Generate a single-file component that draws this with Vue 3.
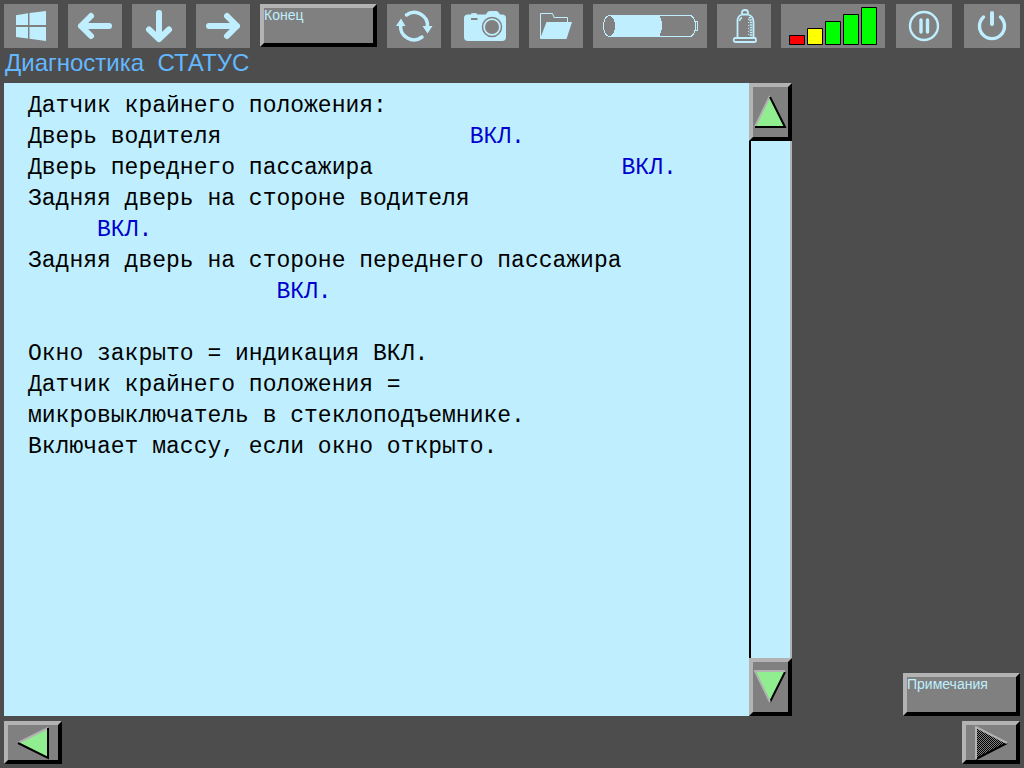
<script setup>
const title = 'Диагностика  СТАТУС'

const lines = [
  { text: 'Датчик крайнего положения:' },
  { text: 'Дверь водителя', pad: 18, value: 'ВКЛ.' },
  { text: 'Дверь переднего пассажира', pad: 18, value: 'ВКЛ.' },
  { text: 'Задняя дверь на стороне водителя' },
  { text: '', pad: 5, value: 'ВКЛ.' },
  { text: 'Задняя дверь на стороне переднего пассажира' },
  { text: '', pad: 18, value: 'ВКЛ.' },
  { text: '' },
  { text: 'Окно закрыто = индикация ВКЛ.' },
  { text: 'Датчик крайнего положения =' },
  { text: 'микровыключатель в стеклоподъемнике.' },
  { text: 'Включает массу, если окно открыто.' },
]
</script>

<template>
  <div class="screen">
    <header class="toolbar">
      <button class="tool" aria-label="Windows">
        <svg width="54" height="44" viewBox="0 0 54 44" fill="#bfefff">
          <path d="M12 11.300L24 9.300V21H12zM25.500 9L42 7V21H25.500zM12 23H24V34.500L12 33zM25.500 23H42V37L25.500 34.800z" />
        </svg>
      </button>
      <button class="tool" aria-label="Назад">
        <svg width="54" height="44" viewBox="0 0 54 44" class="arrow"><path d="M41 22H13M23 12L13 22L23 32" /></svg>
      </button>
      <button class="tool" aria-label="Вниз">
        <svg width="54" height="44" viewBox="0 0 54 44" class="arrow"><path d="M27 9V35M17 25.500L27 35L37 25.500" /></svg>
      </button>
      <button class="tool" aria-label="Вперёд">
        <svg width="54" height="44" viewBox="0 0 54 44" class="arrow"><path d="M13 22H41M31 12L41 22L31 32" /></svg>
      </button>
      <button class="raised labelled">Конец</button>
      <button class="tool" aria-label="Обновить">
        <svg width="54" height="44" viewBox="0 0 54 44">
          <g fill="none" stroke="#bfefff" stroke-width="3.500" stroke-linecap="round">
            <path d="M19.500 11A13.300 13.300 0 0 1 40.500 23" />
            <path d="M35 33A13.300 13.300 0 0 1 13.700 21" />
          </g>
          <path fill="#bfefff" d="M35.500 22H45.500L40.500 29.500zM9 22H18.500L14 14.500z" />
        </svg>
      </button>
      <button class="tool camera" aria-label="Снимок">
        <svg width="68" height="44" viewBox="0 0 68 44">
          <path fill="#bfefff" d="M17 10.500H20V9.500Q23 8.500 26 9.500V10.500H35L36 8.500Q37 7 39 7H45Q47 7 48 9L49 10.500H51Q55 10.500 55 14V33Q55 37 51 37H17Q13 37 13 33V14Q13 10.500 17 10.500z" />
          <g fill="none" stroke="#808080">
            <circle cx="41" cy="23" r="9.500" stroke-width="1.500" />
            <path d="M20 15H26.500" stroke-width="2" />
          </g>
          <circle cx="41" cy="23" r="7" fill="#808080" />
        </svg>
      </button>
      <button class="tool" aria-label="Открыть папку">
        <svg width="54" height="44" viewBox="0 0 54 44">
          <path fill="none" stroke="#bfefff" d="M11.500 34V9.500H23.500L25 13.500H38.500V18" />
          <path fill="#bfefff" d="M11 35L17.500 18H43L37.500 35z" />
        </svg>
      </button>
      <button class="tool battery" aria-label="Батарея">
        <svg width="114" height="44" viewBox="0 0 114 44" shape-rendering="crispEdges">
          <path fill="#bfefff" d="M16 11H66Q69 15 69 22Q69 28 66 33H16z" />
          <g fill="none" stroke="#bfefff">
            <path d="M16 11.500H98Q102.500 15 102.500 22Q102.500 29 98 32.500H16" />
            <path d="M102 17.500H104.500V26.500H102" />
          </g>
          <ellipse cx="16.500" cy="22" rx="6" ry="10.500" fill="#808080" stroke="#bfefff" />
        </svg>
      </button>
      <button class="tool" aria-label="Защита">
        <svg width="54" height="44" viewBox="0 0 54 44" fill="none" stroke="#bfefff" stroke-width="1.800" stroke-linejoin="round">
          <path d="M20.500 34V17Q20.500 12 25 10.500V8Q25.500 6 28 6Q31 6 31 8.500V10.500Q36.500 12 36.500 18V34" />
          <path d="M25 10.500H31M18 34H38.500Q40 38 37.500 38H18.500Q16 38 17 34.500z" />
          <path stroke-width="1.400" d="M22.500 17Q23 14.500 25 13.500" />
          <path stroke-width="2.500" stroke-dasharray="1.500 1" d="M32.500 13L34 17V34" />
          <path stroke-width="1" stroke-dasharray="1 2" d="M31.500 15V34" />
        </svg>
      </button>
      <button class="tool signal" aria-label="Уровень сигнала">
        <svg width="104" height="44" viewBox="0 0 104 44" stroke="#000">
          <path fill="#f00" d="M8.500 31.500H23.500V40.500H8.500z" />
          <path fill="#ff0" d="M26.500 24.500H41.500V40.500H26.500z" />
          <path fill="#0f0" d="M44.500 17.500H59.500V40.500H44.500zM62.500 10.500H77.500V40.500H62.500zM80.500 3.500H95.500V40.500H80.500z" />
        </svg>
      </button>
      <div class="power-group">
        <button class="tool wide" aria-label="Пауза">
          <svg width="56" height="44" viewBox="0 0 56 44" fill="none" stroke="#bfefff">
            <circle cx="28" cy="22" r="14" stroke-width="2.400" />
            <path d="M25 16V28M31.500 16V28" stroke-width="3.400" stroke-linecap="round" />
          </svg>
        </button>
        <button class="tool wide" aria-label="Выключение">
          <svg width="56" height="44" viewBox="0 0 56 44" fill="none" stroke="#bfefff" stroke-linecap="round">
            <path d="M28 9V20" stroke-width="4" />
            <path d="M19.500 13A12.500 12.500 0 1 0 36.500 13" stroke-width="3.400" />
          </svg>
        </button>
      </div>
    </header>

    <h1 class="title">{{ title }}</h1>

    <main class="main">
      <section class="panel">
        <p v-for="(line, i) in lines" :key="i" class="line">{{ line.text }}<span v-if="line.value" class="value">{{ ' '.repeat(line.pad) + line.value }}</span></p>
      </section>
      <div class="scroll">
        <button class="raised arrow-button" aria-label="Прокрутить вверх">
          <svg width="34" height="34" viewBox="0 0 34 34">
            <path fill="#90ee90" d="M16 1L31 32H1z" />
            <path fill="none" stroke="#b3b3b3" stroke-width="2" d="M1 32L16 1" />
            <path fill="none" stroke="#000" stroke-width="2" d="M16 2L31 32H1" />
          </svg>
        </button>
        <div class="track"></div>
        <button class="raised arrow-button" aria-label="Прокрутить вниз">
          <svg width="34" height="34" viewBox="0 0 34 34">
            <path fill="#90ee90" d="M1 1H31L16 32z" />
            <path fill="none" stroke="#000" stroke-width="2" d="M31 2L16 32" />
            <path fill="none" stroke="#b3b3b3" stroke-width="2" d="M31 1H1L16 32" />
          </svg>
        </button>
      </div>
      <aside class="side">
        <button class="raised labelled">Примечания</button>
      </aside>
    </main>

    <footer class="footer">
      <button class="raised nav-button" aria-label="Предыдущая страница">
        <svg width="34" height="34" viewBox="0 0 34 34">
          <path fill="#90ee90" d="M2 17L32 2V32z" />
          <path fill="none" stroke="#b3b3b3" stroke-width="2" d="M2 17L32 2" />
          <path fill="none" stroke="#000" stroke-width="2" d="M32 2V32L2 17" />
        </svg>
      </button>
      <button class="raised nav-button" aria-label="Следующая страница" disabled>
        <svg width="34" height="34" viewBox="0 0 34 34">
          <defs>
            <pattern id="dither" width="2" height="2" patternUnits="userSpaceOnUse">
              <rect width="2" height="2" fill="#808080" />
              <path fill="#000" d="M0 0H1V1H0zM1 1H2V2H1z" />
            </pattern>
          </defs>
          <path fill="url(#dither)" d="M2 1L33 17L2 33z" />
          <path fill="none" stroke="#000" stroke-width="2" d="M33 17L2 33" />
          <path fill="none" stroke="#b3b3b3" stroke-width="2" d="M2 33V1L33 17" />
        </svg>
      </button>
    </footer>
  </div>
</template>

<style>
body {
  margin: 0;
  background: #4d4d4d;
}
</style>

<style scoped>
.screen {
  box-sizing: border-box;
  min-height: 100vh;
  padding: 4px;
  display: flex;
  flex-direction: column;
  background: #4d4d4d;
  font-family: "Liberation Sans", Arial, sans-serif;
}

button {
  box-sizing: border-box;
  margin: 0;
  padding: 0;
  border: 0;
  flex: none;
  background: #808080;
  color: #bfefff;
  font-family: inherit;
}

svg {
  display: block;
}

.toolbar {
  display: flex;
  gap: 10px;
}

.tool {
  width: 54px;
  height: 44px;
}

.camera {
  width: 68px;
}

.battery {
  width: 114px;
}

.signal {
  width: 104px;
}

.wide {
  width: 56px;
}

.power-group {
  display: flex;
  gap: 12px;
  margin-left: auto;
}

.arrow path {
  fill: none;
  stroke: #bfefff;
  stroke-width: 6;
  stroke-linecap: round;
  stroke-linejoin: round;
}

.raised {
  border: 4px solid;
  border-color: #b3b3b3 #000 #000 #b3b3b3;
}

.labelled {
  width: 117px;
  height: 43px;
  display: flex;
  align-items: flex-start;
  font-size: 14px;
  line-height: 14px;
}

.title {
  margin: 0;
  padding-left: 1px;
  height: 35px;
  line-height: 30px;
  font-size: 24px;
  font-weight: 400;
  color: #63b8ff;
  white-space: pre;
}

.main {
  flex: 1;
  display: flex;
}

.panel {
  flex: 1;
  padding: 8px 0 0 24px;
  background: #bfefff;
  font-family: "Liberation Mono", "Courier New", monospace;
  font-size: 23px;
}

.line {
  margin: 0;
  height: 31px;
  line-height: 31px;
  color: #000;
  white-space: pre;
}

.value {
  color: #0000cd;
}

.scroll {
  width: 43px;
  display: flex;
  flex-direction: column;
}

.track {
  flex: 1;
  background: #bfefff;
  border-left: 2px solid #000;
  border-right: 2px solid #b3b3b3;
}

.arrow-button,
.nav-button {
  display: flex;
  align-items: center;
  justify-content: center;
}

.arrow-button {
  height: 58px;
}

.nav-button {
  width: 58px;
  height: 43px;
}

.side {
  width: 228px;
  display: flex;
  align-items: flex-end;
  justify-content: flex-end;
}

.footer {
  display: flex;
  justify-content: space-between;
  margin-top: 5px;
}
</style>
